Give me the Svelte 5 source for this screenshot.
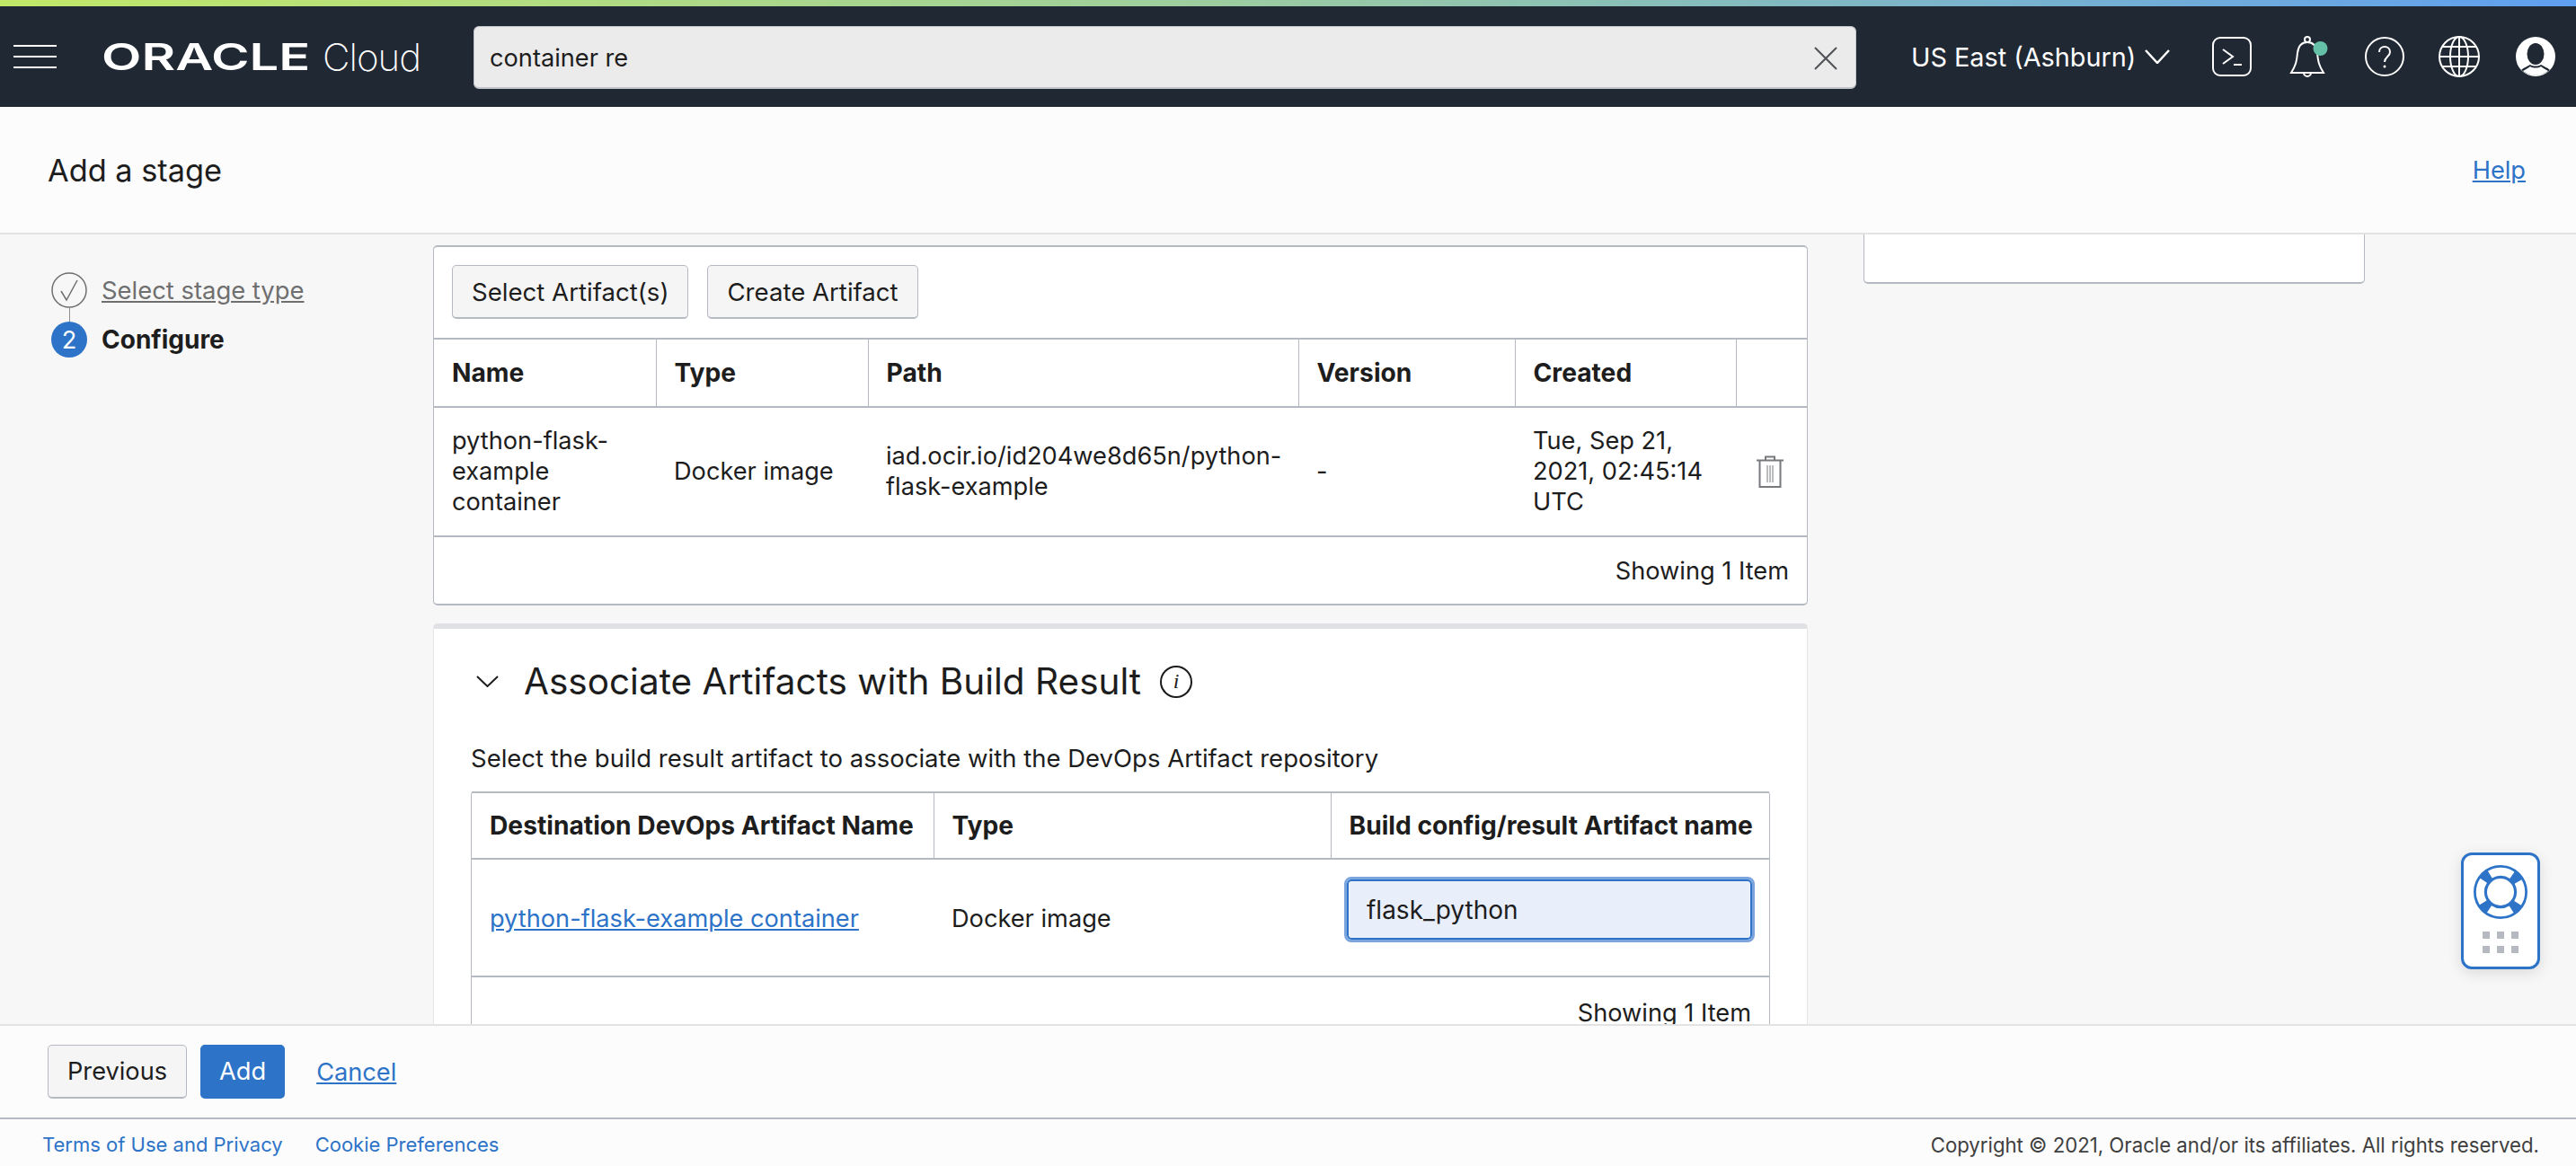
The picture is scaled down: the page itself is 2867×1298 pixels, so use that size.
<script>
  const columns = ['Name', 'Type', 'Path', 'Version', 'Created', '']
  const gridDots = [0, 1, 2, 3, 4, 5]
</script>

<div class="page">
  <div class="rainbow"></div>

  <header class="topbar">
    <div class="burger"><span></span><span></span><span></span></div>
    <div class="logo"><span class="oracle">ORACLE</span><span class="cloud">Cloud</span></div>
    <div class="search">
      <span>container re</span>
      <svg class="clear" viewBox="0 0 26 26" width="26" height="26"><path d="M1 1l24 24M25 1L1 25" stroke="#4f5256" stroke-width="2" fill="none" /></svg>
    </div>
    <div class="region">US East (Ashburn)</div>
    <svg class="region-chev" viewBox="0 0 28 16" width="28" height="16"><path d="M1 1l13 14L27 1" stroke="#fff" stroke-width="2.5" fill="none" /></svg>

    <svg class="ico term" viewBox="0 0 44 44" width="44" height="44" fill="none" stroke="#fff" stroke-width="2">
      <rect x="1" y="1" width="42" height="42" rx="8" />
      <path d="M12 14l11 8-11 8M24 31h9" />
    </svg>
    <svg class="ico bell" viewBox="0 0 44 46" width="44" height="46" fill="none" stroke="#fff" stroke-width="2">
      <circle cx="19" cy="4" r="3" />
      <path d="M1 41c5-8 6-12 7-22 1-8 5-12 11-12s10 4 11 12c1 10 2 14 7 22z" />
      <path d="M15 41a4 4 0 0 0 8 0" />
      <circle cx="33.500" cy="14" r="8" fill="#64c0a6" stroke="none" />
    </svg>
    <svg class="ico help" viewBox="0 0 44 44" width="44" height="44" fill="none" stroke="#fff" stroke-width="2">
      <circle cx="22" cy="22" r="21" />
      <path d="M16 17c0-4 3-6 6-6s6 2 6 6c0 5-6 5-6 11" />
      <circle cx="22" cy="33" r="1.500" fill="#fff" stroke="none" />
    </svg>
    <svg class="ico globe" viewBox="0 0 46 46" width="46" height="46" fill="none" stroke="#fff" stroke-width="2">
      <circle cx="23" cy="23" r="22" />
      <ellipse cx="23" cy="23" rx="10" ry="22" />
      <path d="M23 1v44M1 23h44M5 12h36M5 34h36" />
    </svg>
    <svg class="ico user" viewBox="0 0 44 44" width="44" height="44">
      <circle cx="22" cy="22" r="22" fill="#fff" />
      <ellipse cx="22" cy="19" rx="9.500" ry="12" fill="#202833" />
      <path d="M6 37c3-3 7-4 10-6 3 2 9 2 12 0 3 2 7 3 10 6-8 7-24 7-32 0z" fill="#202833" />
      <path d="M8 38c3-2 6-3 8-5 3 2 9 2 12 0 2 2 5 3 8 5-8 6-20 6-28 0z" fill="#fff" />
    </svg>
  </header>

  <div class="titlebar">
    <h1>Add a stage</h1>
    <a class="link" href="#help">Help</a>
  </div>

  <div class="content">
    <nav class="steps">
      <div class="step done">
        <svg viewBox="0 0 40 40" width="40" height="40" fill="none" stroke="#6f6f6f" stroke-width="1.500">
          <circle cx="20" cy="20" r="19" />
          <path d="M11 21l6 10 12-22" />
        </svg>
        <a href="#type">Select stage type</a>
      </div>
      <div class="connector"></div>
      <div class="step current">
        <span class="num">2</span>
        <strong>Configure</strong>
      </div>
    </nav>

    <main class="main">
      <section class="card">
        <div class="toolbar">
          <button class="btn">Select Artifact(s)</button>
          <button class="btn">Create Artifact</button>
        </div>
        <table class="artifacts">
          <colgroup>
            <col style="width:247px" /><col style="width:236px" /><col style="width:479px" />
            <col style="width:241px" /><col style="width:246px" /><col />
          </colgroup>
          <thead>
            <tr>
              {#each columns as c}<th>{c}</th>{/each}
            </tr>
          </thead>
          <tbody>
            <tr>
              <td>python-flask-example container</td>
              <td>Docker image</td>
              <td>iad.ocir.io/id204we8d65n/python-flask-example</td>
              <td>-</td>
              <td>Tue, Sep 21, 2021, 02:45:14 UTC</td>
              <td class="trash">
                <svg viewBox="0 0 32 36" width="32" height="36" fill="none" stroke="#77797c" stroke-width="2">
                  <path d="M1 5.500h30M11 5V1.500h10V5M4.500 6v29h23V6" />
                  <path d="M13 11v19M16 11v19M19 11v19" stroke-width="1" />
                </svg>
              </td>
            </tr>
          </tbody>
        </table>
        <div class="showing">Showing 1 Item</div>
      </section>

      <section class="card assoc">
        <div class="assoc-head">
          <svg viewBox="0 0 25 13" width="25" height="13"><path d="M1 1l11.500 11L24 1" stroke="#1d1d1d" stroke-width="2" fill="none" /></svg>
          <h2>Associate Artifacts with Build Result</h2>
          <span class="info">i</span>
        </div>
        <p>Select the build result artifact to associate with the DevOps Artifact repository</p>
        <div class="inner">
          <table class="results">
            <colgroup>
              <col style="width:514px" /><col style="width:442px" /><col />
            </colgroup>
            <thead>
              <tr>
                <th>Destination DevOps Artifact Name</th>
                <th>Type</th>
                <th>Build config/result Artifact name</th>
              </tr>
            </thead>
            <tbody>
              <tr>
                <td><a class="link" href="#artifact">python-flask-example container</a></td>
                <td>Docker image</td>
                <td class="input-cell"><input value="flask_python" /></td>
              </tr>
            </tbody>
          </table>
          <div class="showing">Showing 1 Item</div>
        </div>
      </section>
    </main>

    <aside class="side"></aside>
  </div>

  <div class="actions">
    <button class="btn">Previous</button>
    <button class="btn primary">Add</button>
    <a class="link" href="#cancel">Cancel</a>
  </div>

  <footer class="footer">
    <a href="#terms">Terms of Use and Privacy</a>
    <a href="#cookies">Cookie Preferences</a>
    <span>Copyright © 2021, Oracle and/or its affiliates. All rights reserved.</span>
  </footer>

  <div class="helper">
    <svg viewBox="0 0 60 60" width="60" height="60">
      <circle cx="30" cy="30" r="22.500" fill="none" stroke="#2d73c8" stroke-width="15" />
      <circle cx="30" cy="30" r="22.700" fill="none" stroke="#fff" stroke-width="9" stroke-dasharray="26 9.660" stroke-dashoffset="13" />
    </svg>
    <div class="dots">
      {#each gridDots as d}<span></span>{/each}
    </div>
  </div>
</div>

<style>
  :global(body) {
    margin: 0;
    font-family: Inter, "Liberation Sans", sans-serif;
    color: #1d1d1d;
  }

  .page {
    position: relative;
    height: 1298px;
    display: flex;
    flex-direction: column;
    overflow: hidden;
    background: #f7f7f7;
    font-size: 27.200px;
  }

  .rainbow {
    height: 7px;
    flex: none;
    background: linear-gradient(90deg, #c2e868, #9fcf9c 45%, #5f9ff0);
  }

  .topbar {
    height: 112px;
    flex: none;
    display: flex;
    align-items: center;
    background: #202833;
    color: #fff;
  }

  .burger {
    width: 48px;
    margin-left: 15px;
    display: flex;
    flex-direction: column;
    gap: 10px;
  }
  .burger span { height: 2px; background: #fff; }

  .logo {
    width: 414px;
    margin-left: 50px;
    display: flex;
    align-items: center;
    white-space: nowrap;
  }
  .oracle {
    display: inline-block;
    width: 246px;
    font-size: 41px;
    font-weight: 600;
    line-height: 1;
    transform: scaleX(1.41);
    transform-origin: left center;
  }
  .cloud { font-size: 42px; font-weight: 200; letter-spacing: -1px; }

  .search {
    width: 1539px;
    height: 70px;
    margin-top: 2px;
    box-sizing: border-box;
    display: flex;
    align-items: center;
    justify-content: space-between;
    padding: 2px 20px 0 17px;
    background: #ebebeb;
    color: #1d1d1d;
    border: 1px solid #c0c3c9;
    border-bottom-width: 2px;
    border-radius: 6px;
  }

  .region { margin-left: 61px; white-space: nowrap; font-size: 28.800px; }
  .region-chev { margin-left: 10px; }

  .ico { flex: none; overflow: visible; }
  .term { margin-left: 47px; }
  .bell { margin-left: 43px; }
  .help { margin-left: 39px; }
  .globe { margin-left: 38px; }
  .user { margin-left: 40px; }

  .titlebar {
    height: 142px;
    flex: none;
    box-sizing: border-box;
    display: flex;
    align-items: center;
    justify-content: space-between;
    padding: 0 56px 0 53px;
    background: #fcfcfc;
    border-bottom: 2px solid #e3e3e3;
  }
  h1 { margin: 0; font-size: 34.300px; font-weight: 400; }

  .link { color: #2d73c8; }

  .content {
    flex: 1;
    min-height: 0;
    display: flex;
    align-items: flex-start;
    overflow: hidden;
  }

  .steps {
    width: 482px;
    flex: none;
    box-sizing: border-box;
    padding: 42px 0 0 57px;
  }
  .step {
    display: flex;
    align-items: center;
    gap: 16px;
  }
  .step a { color: #6f6f6f; font-size: 27.400px; }
  .connector { width: 1px; height: 15px; margin-left: 20px; background: #8f8f8f; }
  .num {
    width: 40px;
    height: 40px;
    border-radius: 50%;
    display: flex;
    align-items: center;
    justify-content: center;
    background: #2d73c8;
    color: #fff;
  }
  .current strong { font-weight: 700; font-size: 28px; }

  .main {
    width: 1530px;
    flex: none;
    padding-top: 12px;
  }

  .card {
    box-sizing: border-box;
    background: #fff;
    border: 1px solid #b5bac2;
    border-top-width: 2px;
    border-bottom-width: 2px;
    border-radius: 5px;
  }

  .toolbar {
    height: 101px;
    box-sizing: border-box;
    display: flex;
    align-items: flex-start;
    gap: 21px;
    padding: 20px 0 0 20px;
  }
  .toolbar .btn { font-size: 27.600px; }

  .btn {
    height: 60px;
    box-sizing: border-box;
    padding: 0 21px;
    background: #f5f5f5;
    color: #1d1d1d;
    border: 1px solid #b5bac2;
    border-bottom-width: 2px;
    border-radius: 5px;
    font: inherit;
  }
  .btn.primary {
    background: #2d73c8;
    border-color: #2d73c8;
    color: #fff;
    padding: 0 20px;
  }

  table {
    width: 100%;
    table-layout: fixed;
    border-collapse: collapse;
  }
  th, td {
    box-sizing: border-box;
    padding: 0 20px;
    text-align: left;
    line-height: 34px;
  }
  th {
    height: 76px;
    font-size: 28.200px;
    font-weight: 700;
    border-top: 2px solid #b5bac2;
    border-bottom: 2px solid #b5bac2;
    border-left: 1px solid #b5bac2;
  }
  th:first-child { border-left: none; }

  .artifacts td {
    height: 144px;
    border-bottom: 2px solid #b5bac2;
  }
  .trash { padding: 0 0 0 22px; }
  .trash svg { display: block; }

  .showing {
    height: 74px;
    display: flex;
    align-items: center;
    justify-content: flex-end;
    padding-right: 20px;
  }

  .assoc {
    margin-top: 20px;
    height: 520px;
    border-top: 6px solid #e0e1e5;
    border-color: #e0e1e5 #e6e6e6;
    padding: 0 41px;
  }
  .assoc-head {
    display: flex;
    align-items: center;
    height: 37px;
    margin-top: 40px;
    margin-left: 6px;
  }
  h2 {
    margin: 0 21px 0 28px;
    font-size: 40.500px;
    font-weight: 400;
    white-space: nowrap;
  }
  .info {
    width: 36px;
    height: 36px;
    box-sizing: border-box;
    display: flex;
    align-items: center;
    justify-content: center;
    border: 2px solid #1d1d1d;
    border-radius: 50%;
    font-family: "Liberation Serif", serif;
    font-style: italic;
    font-size: 24px;
  }
  p { margin: 50px 0 20px; line-height: 34px; font-size: 27.500px; }

  .inner {
    border: 1px solid #b5bac2;
    border-top: none;
    border-radius: 4px;
  }
  .inner .showing { padding-top: 2px; }
  .results th { height: 74px; white-space: nowrap; }
  .results td {
    height: 131px;
    padding-top: 3px;
    border-bottom: 2px solid #b5bac2;
  }
  .results .input-cell { vertical-align: top; padding: 0 19px 0 18px; }
  input {
    display: block;
    box-sizing: border-box;
    width: 100%;
    height: 67px;
    margin-top: 22px;
    padding: 0 20px;
    background: #e8effb;
    color: #1d1d1d;
    border: 2px solid #2d73c8;
    border-radius: 5px;
    outline: 3px solid #7ba5dc;
    outline-offset: 0;
    font: inherit;
    font-size: 28px;
  }

  .side {
    width: 558px;
    height: 55px;
    flex: none;
    margin-left: 62px;
    box-sizing: border-box;
    background: #fff;
    border: 1px solid #b5bac2;
    border-top: none;
    border-bottom-width: 2px;
    border-radius: 0 0 5px 5px;
  }

  .actions {
    height: 106px;
    flex: none;
    box-sizing: border-box;
    display: flex;
    align-items: center;
    gap: 15px;
    padding-left: 53px;
    background: #fcfcfc;
    border-top: 2px solid #e3e3e3;
    border-bottom: 2px solid #b5bac2;
  }
  .actions .link { margin-left: 20px; }

  .footer {
    height: 52px;
    flex: none;
    box-sizing: border-box;
    display: flex;
    align-items: center;
    gap: 36px;
    padding: 4px 41px 0 47px;
    background: #fcfcfc;
    font-size: 22px;
  }
  .footer a { color: #2d73c8; text-decoration: none; }
  .footer span { margin-left: auto; color: #3f3f3f; font-size: 22.200px; }

  .helper {
    position: absolute;
    left: 2739px;
    top: 949px;
    width: 88px;
    height: 130px;
    box-sizing: border-box;
    display: flex;
    flex-direction: column;
    align-items: center;
    padding-top: 11px;
    background: #fff;
    border: 3px solid #2d73c8;
    border-radius: 12px;
    box-shadow: 0 4px 16px rgba(0, 0, 0, 0.12);
  }
  .dots {
    display: grid;
    grid-template-columns: repeat(3, 8px);
    gap: 8px;
    margin-top: 14px;
  }
  .dots span { height: 8px; background: #b5b9c0; }
</style>
